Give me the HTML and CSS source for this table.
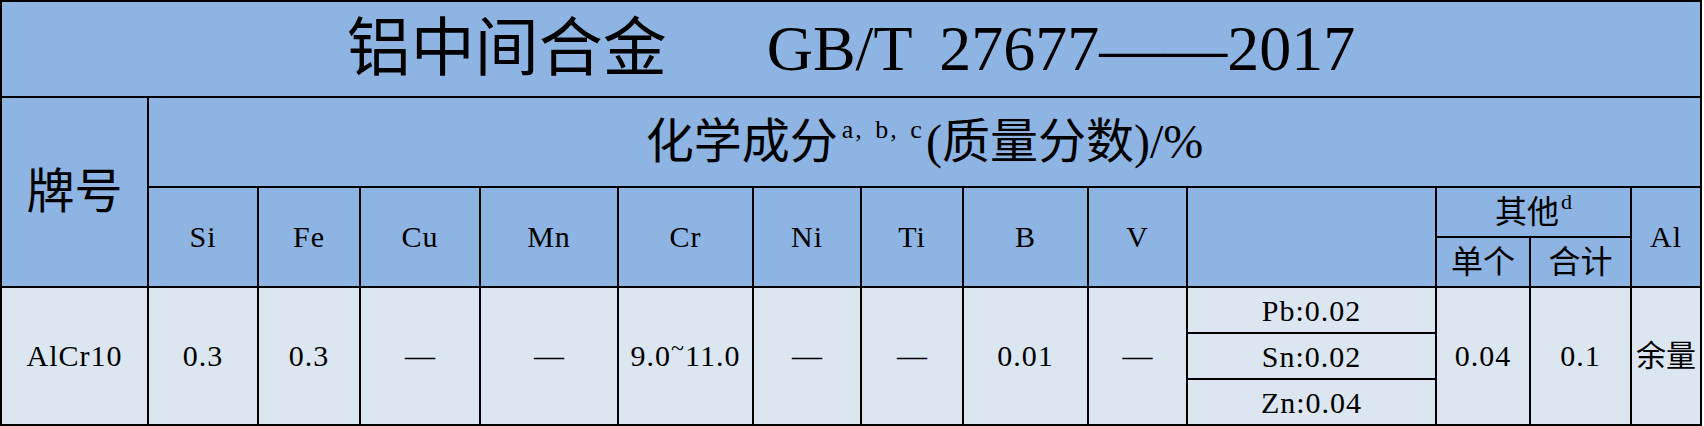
FILE: index.html
```html
<!DOCTYPE html>
<html lang="zh-CN">
<head>
<meta charset="utf-8">
<title>铝中间合金 GB/T 27677——2017</title>
<link rel="stylesheet" href="styles.css">
</head>
<body>
<table class="spec">
  <colgroup>
    <col class="c-grade">
    <col class="c-si">
    <col class="c-fe">
    <col class="c-cu">
    <col class="c-mn">
    <col class="c-cr">
    <col class="c-ni">
    <col class="c-ti">
    <col class="c-b">
    <col class="c-v">
    <col class="c-misc">
    <col class="c-single">
    <col class="c-total">
    <col class="c-al">
  </colgroup>
  <tr class="r-title">
    <th colspan="14" class="title">铝中间合金<span class="std">GB/T 27677——2017</span></th>
  </tr>
  <tr class="r-chem">
    <th rowspan="3" class="grade">牌号</th>
    <th colspan="13" class="chem">化学成分<sup class="note">a, b, c</sup>(质量分数)/%</th>
  </tr>
  <tr class="r-h1">
    <th rowspan="2" class="el">Si</th>
    <th rowspan="2" class="el">Fe</th>
    <th rowspan="2" class="el">Cu</th>
    <th rowspan="2" class="el">Mn</th>
    <th rowspan="2" class="el">Cr</th>
    <th rowspan="2" class="el">Ni</th>
    <th rowspan="2" class="el">Ti</th>
    <th rowspan="2" class="el">B</th>
    <th rowspan="2" class="el">V</th>
    <th rowspan="2" class="el"></th>
    <th colspan="2" class="cn other">其他<sup class="note-d">d</sup></th>
    <th rowspan="2" class="el">Al</th>
  </tr>
  <tr class="r-h2">
    <th class="cn sub">单个</th>
    <th class="cn sub">合计</th>
  </tr>
  <tr class="r-d">
    <td rowspan="3" class="val">AlCr10</td>
    <td rowspan="3" class="val">0.3</td>
    <td rowspan="3" class="val">0.3</td>
    <td rowspan="3" class="val dash">—</td>
    <td rowspan="3" class="val dash">—</td>
    <td rowspan="3" class="val">9.0<span class="tilde">~</span>11.0</td>
    <td rowspan="3" class="val dash">—</td>
    <td rowspan="3" class="val dash">—</td>
    <td rowspan="3" class="val">0.01</td>
    <td rowspan="3" class="val dash">—</td>
    <td class="val small">Pb:0.02</td>
    <td rowspan="3" class="val">0.04</td>
    <td rowspan="3" class="val">0.1</td>
    <td rowspan="3" class="val cnv">余量</td>
  </tr>
  <tr class="r-d">
    <td class="val small">Sn:0.02</td>
  </tr>
  <tr class="r-d">
    <td class="val small">Zn:0.04</td>
  </tr>
</table>
</body>
</html>
```
FILE: styles.css
```css
html, body {
  margin: 0;
  padding: 0;
  background: #ffffff;
}

.spec {
  border-collapse: collapse;
  table-layout: fixed;
  width: 1702px;
  font-family: "Liberation Serif", "Noto Sans CJK SC", serif;
  color: #000;
}

.c-grade { width: 147px; }
.c-si { width: 110px; }
.c-fe { width: 102px; }
.c-cu { width: 120px; }
.c-mn { width: 138px; }
.c-cr { width: 135px; }
.c-ni { width: 108px; }
.c-ti { width: 102px; }
.c-b { width: 125px; }
.c-v { width: 99px; }
.c-misc { width: 249px; }
.c-single { width: 94px; }
.c-total { width: 101px; }
.c-al { width: 70px; }

.spec th,
.spec td {
  border: 2px solid #000;
  padding: 0;
  text-align: center;
  vertical-align: middle;
  font-weight: normal;
  line-height: 1.2;
  white-space: nowrap;
  overflow: hidden;
}

.spec th {
  background: #8db4e2;
}

.spec td {
  background: #dce6f1;
}

.r-title { height: 96px; }
.r-chem { height: 90px; }
.r-h1 { height: 50px; }
.r-h2 { height: 50px; }
.r-d { height: 46px; }

.title {
  font-size: 64px;
  padding-top: 19px;
}

.title .std {
  margin-left: 100px;
  word-spacing: 12px;
}

.grade {
  font-size: 48px;
  padding-top: 16px;
}

.chem {
  font-size: 48px;
  padding-top: 18px;
}

.note {
  font-size: 26px;
  line-height: 0;
  vertical-align: 20px;
  margin: 0 2px 0 4px;
  letter-spacing: 2px;
  word-spacing: 3px;
}

.el {
  font-size: 30px;
  letter-spacing: 1px;
  padding-top: 10px;
}

.cn {
  font-size: 32px;
}

.other {
  padding-top: 8px;
}

.sub {
  padding-top: 10px;
}

.note-d {
  font-size: 22px;
  line-height: 0;
  vertical-align: 14px;
  margin-left: 2px;
}

.val {
  font-size: 30px;
  letter-spacing: 1px;
  padding-top: 8px;
}

.val.small {
  padding-top: 2px;
}

.dash {
  letter-spacing: 0;
}

.cnv {
  font-size: 30px;
  letter-spacing: 0;
}

.tilde {
  display: inline-block;
  vertical-align: 10px;
  font-size: 24px;
  line-height: 0;
}
```
